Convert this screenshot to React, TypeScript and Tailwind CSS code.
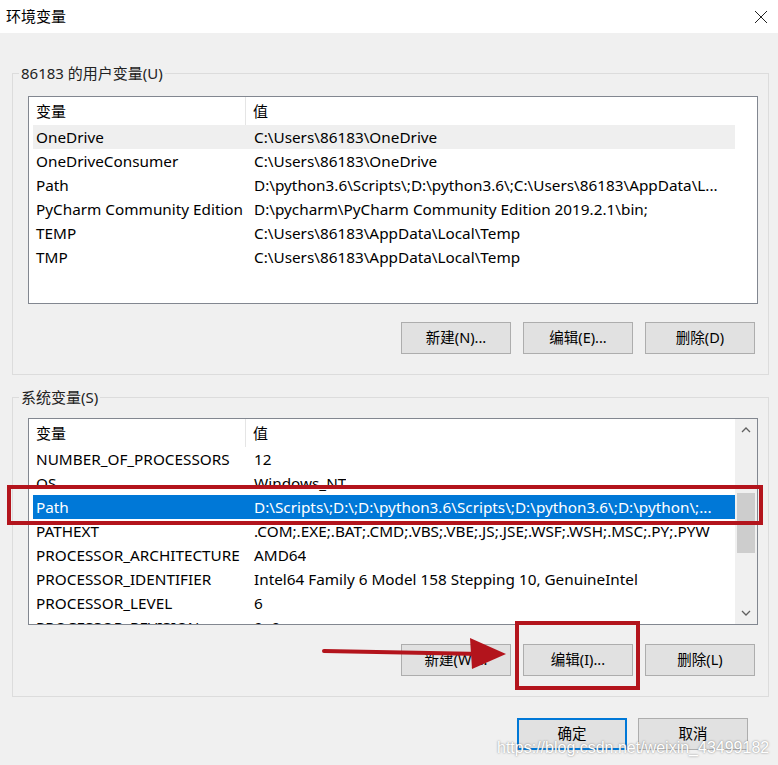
import React from "react";

const FONT = { fontFamily: '"Noto Sans", "Noto Sans CJK SC", sans-serif' };

type Row = { name: string; value: string; state?: "hover" | "selected" };

const userRows: Row[] = [
  { name: "OneDrive", value: "C:\\Users\\86183\\OneDrive", state: "hover" },
  { name: "OneDriveConsumer", value: "C:\\Users\\86183\\OneDrive" },
  { name: "Path", value: "D:\\python3.6\\Scripts\\;D:\\python3.6\\;C:\\Users\\86183\\AppData\\L..." },
  { name: "PyCharm Community Edition", value: "D:\\pycharm\\PyCharm Community Edition 2019.2.1\\bin;" },
  { name: "TEMP", value: "C:\\Users\\86183\\AppData\\Local\\Temp" },
  { name: "TMP", value: "C:\\Users\\86183\\AppData\\Local\\Temp" },
];

const sysRows: Row[] = [
  { name: "NUMBER_OF_PROCESSORS", value: "12" },
  { name: "OS", value: "Windows_NT" },
  { name: "Path", value: "D:\\Scripts\\;D:\\;D:\\python3.6\\Scripts\\;D:\\python3.6\\;D:\\python\\;...", state: "selected" },
  { name: "PATHEXT", value: ".COM;.EXE;.BAT;.CMD;.VBS;.VBE;.JS;.JSE;.WSF;.WSH;.MSC;.PY;.PYW" },
  { name: "PROCESSOR_ARCHITECTURE", value: "AMD64" },
  { name: "PROCESSOR_IDENTIFIER", value: "Intel64 Family 6 Model 158 Stepping 10, GenuineIntel" },
  { name: "PROCESSOR_LEVEL", value: "6" },
  { name: "PROCESSOR_REVISION", value: "9e0a" },
];

function ListBody({ rows }: { rows: Row[] }) {
  return (
    <div className="flex-1 pl-[4px] overflow-hidden">
      <div className="flex h-[28px] items-center text-[15px] text-black">
        <div className="w-[213px] pl-[3px] h-full flex items-center border-r border-[#e5e5e5]">变量</div>
        <div className="pl-[7px]">值</div>
      </div>
      {rows.map((r, i) => (
        <div
          key={i}
          className={
            "flex h-[24px] items-center whitespace-nowrap text-[15.3px] " +
            (r.state === "selected"
              ? "bg-[#0078d7] text-white"
              : r.state === "hover"
              ? "bg-[#efefef] text-black"
              : "text-black")
          }
        >
          <div className="w-[213px] pl-[3px] shrink-0 overflow-hidden">{r.name}</div>
          <div className="pl-[8px] overflow-hidden">{r.value}</div>
        </div>
      ))}
    </div>
  );
}

function Btn({ label, primary }: { label: string; primary?: boolean }) {
  return (
    <div
      className={
        "w-[110px] h-[32px] flex items-center justify-center bg-[#e1e1e1] text-[14.5px] text-black " +
        (primary ? "border-2 border-[#0078d7]" : "border border-[#adadad]")
      }
    >
      {label}
    </div>
  );
}

function Chevron({ up }: { up?: boolean }) {
  return (
    <svg width="10" height="6" viewBox="0 0 10 6">
      <path
        d={up ? "M1 5 L5 1 L9 5" : "M1 1 L5 5 L9 1"}
        fill="none"
        stroke="#606060"
        strokeWidth="1.3"
      />
    </svg>
  );
}

export default function App() {
  return (
    <div className="relative w-[778px] h-[765px] bg-[#f0f0f0] overflow-hidden" style={FONT}>
      {/* title bar */}
      <div className="h-[33px] bg-white flex items-center justify-between pl-[6px] pr-[10px]">
        <span className="text-[15px] text-black">环境变量</span>
        <svg width="14" height="14" viewBox="0 0 14 14">
          <path d="M1 1 L13 13 M13 1 L1 13" stroke="#222" strokeWidth="1" fill="none" />
        </svg>
      </div>

      {/* user vars */}
      <fieldset className="mt-[30px] ml-[12px] w-[757px] border border-[#dcdcdc] pl-[15px] pr-[10px] pb-[20px]">
        <legend className="ml-[-9px] px-[2px] h-[20px] leading-[20px] text-[15px] text-[#222]">
          86183 的用户变量(U)
        </legend>
        <div className="mt-[13px] h-[208px] border border-[#828790] bg-white flex">
          <ListBody rows={userRows} />
          <div className="w-[22px]" />
        </div>
        <div className="mt-[18px] flex justify-end gap-[12px] pr-[3px]">
          <Btn label="新建(N)..." />
          <Btn label="编辑(E)..." />
          <Btn label="删除(D)" />
        </div>
      </fieldset>

      {/* system vars */}
      <fieldset className="mt-[12px] ml-[12px] w-[757px] border border-[#dcdcdc] pl-[15px] pr-[10px] pb-[20px]">
        <legend className="ml-[-9px] px-[2px] h-[20px] leading-[20px] text-[15px] text-[#222]">
          系统变量(S)
        </legend>
        <div className="mt-[11px] h-[207px] border border-[#828790] bg-white flex">
          <ListBody rows={sysRows} />
          <div className="w-[22px] bg-[#f0f0f0] flex flex-col items-center">
            <div className="h-[22px] flex items-center justify-center">
              <Chevron up />
            </div>
            <div className="mt-[52px] w-[18px] h-[60px] bg-[#cdcdcd]" />
            <div className="flex-1" />
            <div className="h-[22px] flex items-center justify-center">
              <Chevron />
            </div>
          </div>
        </div>
        <div className="mt-[19px] flex justify-end gap-[12px] pr-[3px]">
          <Btn label="新建(W)..." />
          <Btn label="编辑(I)..." />
          <Btn label="删除(L)" />
        </div>
      </fieldset>

      {/* dialog buttons */}
      <div className="mt-[21px] flex justify-end gap-[11px] pr-[30px]">
        <Btn label="确定" primary />
        <Btn label="取消" />
      </div>

      {/* annotations */}
      <svg className="absolute left-0 top-0 pointer-events-none" width="778" height="765" viewBox="0 0 778 765">
        <rect x="9" y="487" width="752" height="36" fill="none" stroke="#b3141c" strokeWidth="4" />
        <rect x="517" y="623" width="121" height="65" fill="none" stroke="#b3141c" strokeWidth="4" />
        <path d="M324 651 L482 654" stroke="#b3141c" strokeWidth="4" strokeLinecap="round" fill="none" />
        <path d="M470 638 L506 654 L472 669 Z" fill="#b3141c" />
      </svg>
      <div
        className="absolute left-[497px] top-[736px] text-[16px] text-white whitespace-nowrap pointer-events-none"
        style={{ fontFamily: '"Liberation Sans", Arial, sans-serif', textShadow: "0 0 2px rgba(90,90,90,0.8)" }}
      >
        https://blog.csdn.net/weixin_43499182
      </div>
    </div>
  );
}
